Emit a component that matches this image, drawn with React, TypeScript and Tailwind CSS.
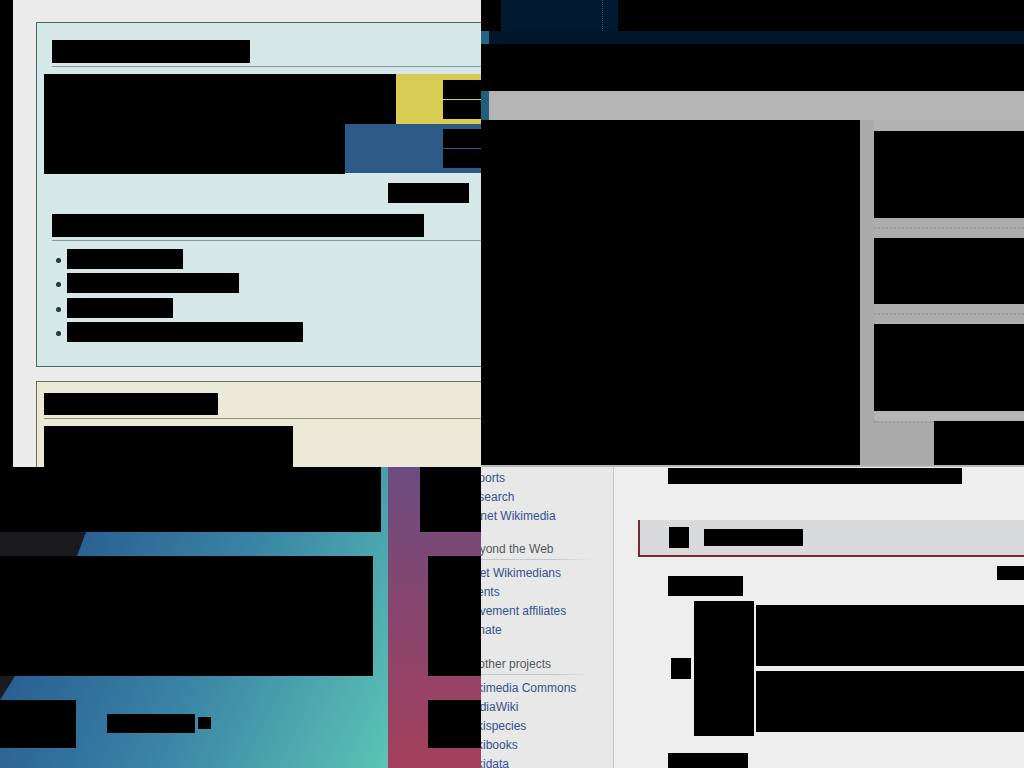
import React from "react";

const portals = [
  { heading: null, mt: "", links: ["Reports", "Research", "Planet Wikimedia"] },
  { heading: "Beyond the Web", mt: "mt-[14px]", links: ["Meet Wikimedians", "Events", "Movement affiliates", "Donate"] },
  {
    heading: "In other projects",
    mt: "mt-[15px]",
    links: ["Wikimedia Commons", "MediaWiki", "Wikispecies", "Wikibooks", "Wikidata"],
  },
];

const bulletWidths = ["w-[116px]", "w-[172px]", "w-[106px]", "w-[236px]"];

function InfoBoxes() {
  return (
    <div className="flex h-full">
      <div className="w-[13px] shrink-0 bg-black" />
      <div className="flex-1 overflow-hidden bg-[#ececec] pl-[23px] pt-[22px]">
        {/* blue box */}
        <div className="w-[520px] border border-[#41696a] bg-[#d5e7e7] pb-[24px] pl-[7px] pt-[17px]">
          <div className="ml-[8px] h-[23px] w-[198px] bg-black" />
          <div className="ml-[8px] mt-[3px] h-px bg-[#889a9a]" />
          <div className="mt-[7px]">
            <div className="flex h-[50px]">
              <div className="w-[352px] bg-black" />
              <div className="flex-1 bg-[#d9cc52] pl-[47px] pt-[6px]">
                <div className="h-[19px] bg-black" />
                <div className="mt-px h-[19px] bg-black" />
              </div>
            </div>
            <div className="flex h-[50px]">
              <div className="w-[301px] bg-black" />
              <div className="mb-px flex-1 bg-[#2d5b87] pl-[98px] pt-[5px]">
                <div className="h-[19px] bg-black" />
                <div className="mt-px h-[19px] bg-black" />
              </div>
            </div>
          </div>
          <div className="ml-[344px] mt-[9px] h-[20px] w-[81px] bg-black" />
          <div className="ml-[8px] mt-[11px] h-[23px] w-[372px] bg-black" />
          <div className="ml-[8px] mt-[3px] h-px bg-[#889a9a]" />
          <ul className="mt-[8px] flex flex-col gap-[4.3px]">
            {bulletWidths.map((w, i) => (
              <li key={i} className="flex h-[20px] items-center">
                <span className="ml-[12px] mt-[3px] h-[5px] w-[5px] rounded-full bg-[#1d3a3c]" />
                <span className={`ml-[6px] h-[20px] bg-black ${w}`} />
              </li>
            ))}
          </ul>
        </div>

        {/* beige box */}
        <div className="mt-[14px] h-[120px] w-[520px] border border-[#6e6d4f] bg-[#ebe9d8] pl-[7px] pt-[11px]">
          <div className="h-[22px] w-[174px] bg-black" />
          <div className="mt-[3px] h-px bg-[#908f72]" />
          <div className="mt-[7px] h-[60px] w-[249px] bg-black" />
        </div>
      </div>
    </div>
  );
}

function DarkHeader() {
  return (
    <div className="flex h-full flex-col">
      <div className="flex h-[31px]">
        <div className="w-[20px] bg-black" />
        <div className="w-[117px] bg-[#011a30]">
          <div className="h-full w-[102px] border-r border-dotted border-[#3a5670]" />
        </div>
        <div className="flex-1 bg-black" />
      </div>
      <div className="flex h-[13px]">
        <div className="w-[8px] bg-[#236582]" />
        <div className="flex-1 bg-[#01162b]" />
      </div>
      <div className="h-[47px] bg-black" />
      <div className="flex h-[29px]">
        <div className="w-[8px] bg-[#1f5f7c]" />
        <div className="flex-1 bg-[#b4b4b4]" />
      </div>
      <div className="flex h-[345px]">
        <div className="w-[379px] bg-black" />
        <div className="flex flex-1 flex-col bg-[#aaaaaa] pl-[14px]">
          <div className="h-[11px] bg-[#b3b3b3]" />
          <div className="h-[87px] bg-black" />
          <div className="flex h-[20px] items-center bg-[#adadad]">
            <div className="w-full border-t-2 border-dotted border-[#9a9a9a]" />
          </div>
          <div className="h-[66px] bg-black" />
          <div className="flex h-[20px] items-center bg-[#adadad]">
            <div className="w-full border-t-2 border-dotted border-[#9a9a9a]" />
          </div>
          <div className="h-[87px] bg-black" />
          <div className="h-[10px] bg-[#b5b5b5]" />
          <div className="flex h-[44px]">
            <div className="w-[60px] border-t-2 border-dotted border-[#9a9a9a]" />
            <div className="flex-1 bg-black" />
          </div>
        </div>
      </div>
      <div className="h-[2px] bg-[#b6b6b6]" />
    </div>
  );
}

function GradientPanel() {
  return (
    <div className="flex h-full">
      <div className="flex w-[388px] flex-col bg-[linear-gradient(115deg,#1f4a88_0%,#3a84a6_55%,#5cc4b5_100%)]">
        <div className="h-[65px] w-[381px] bg-black" />
        <div className="h-[24px] w-[86px] bg-[#1b1b1f] [clip-path:polygon(0_0,100%_0,89.5%_100%,0_100%)]" />
        <div className="h-[120px] w-[373px] bg-black" />
        <div className="h-[24px] w-[15px] bg-[#1b1b1f] [clip-path:polygon(0_0,100%_0,0_100%)]" />
        <div className="flex h-[48px] items-start">
          <div className="h-[48px] w-[76px] bg-black" />
          <div className="ml-[31px] mt-[14px] h-[19px] w-[88px] bg-black" />
          <div className="ml-[3px] mt-[17px] h-[12px] w-[13px] bg-black" />
        </div>
      </div>
      <div className="flex flex-1 flex-col bg-[linear-gradient(to_bottom,#6c4c80,#a53f5c)]">
        <div className="ml-[32px] h-[65px] bg-black" />
        <div className="h-[24px]" />
        <div className="ml-[40px] h-[120px] bg-black" />
        <div className="h-[24px]" />
        <div className="ml-[40px] h-[48px] bg-black" />
      </div>
    </div>
  );
}

function Sidebar() {
  return (
    <div className="w-[133px] shrink-0 overflow-hidden border-r border-[#c5c8cc] bg-[#e8e8e8] pt-[1.5px] font-['Liberation_Sans',Arial,sans-serif] text-[12px]">
      <div className="-ml-[18px] w-[160px]">
        {portals.map((p, i) => (
          <div key={i}>
            {p.heading && (
              <div className={p.mt}>
                <h3 className="ml-[2px] h-[19px] whitespace-nowrap font-normal leading-[19px] text-[#54595d]">{p.heading}</h3>
                <div className="ml-[3px] h-px w-[126px] bg-[linear-gradient(to_right,#c3c6ca_70%,transparent)]" />
                <div className="h-[4px]" />
              </div>
            )}
            <ul>
              {p.links.map((l) => (
                <li key={l} className="h-[19px] whitespace-nowrap leading-[19px] text-[#34528f]">
                  {l}
                </li>
              ))}
            </ul>
          </div>
        ))}
      </div>
    </div>
  );
}

function ArticleArea() {
  return (
    <div className="flex-1 overflow-hidden bg-[#eeeeee]">
      <div className="ml-[54px] mt-px h-[16px] w-[294px] bg-black" />
      <div className="ml-[24px] mt-[36px] flex h-[37px] items-center border-b-2 border-l-2 border-[#732a30] bg-[#d9dadc]">
        <div className="ml-[29px] h-[21px] w-[20px] bg-black" />
        <div className="ml-[15px] h-[17px] w-[99px] bg-black" />
      </div>
      <div className="flex items-start justify-between">
        <div className="ml-[54px] mt-[19px] h-[20px] w-[75px] bg-black" />
        <div className="mt-[9px] h-[14px] w-[27px] bg-black" />
      </div>
      <div className="ml-[57px] mt-[5px] flex items-center">
        <div className="h-[21px] w-[20px] bg-black" />
        <div className="ml-[3px] h-[135px] w-[60px] bg-black" />
        <div className="ml-[2px] flex flex-1 flex-col gap-[5px] self-start pt-[4px]">
          <div className="h-[61px] bg-black" />
          <div className="h-[61px] bg-black" />
        </div>
      </div>
      <div className="ml-[54px] mt-[17px] h-[20px] w-[80px] bg-black" />
    </div>
  );
}

export default function App() {
  return (
    <div className="h-[768px] w-[1024px] overflow-hidden bg-black">
      <div className="flex h-[467px]">
        <div className="w-[481px] shrink-0">
          <InfoBoxes />
        </div>
        <div className="flex-1">
          <DarkHeader />
        </div>
      </div>
      <div className="flex h-[301px]">
        <div className="w-[481px] shrink-0">
          <GradientPanel />
        </div>
        <div className="flex flex-1">
          <Sidebar />
          <ArticleArea />
        </div>
      </div>
    </div>
  );
}
